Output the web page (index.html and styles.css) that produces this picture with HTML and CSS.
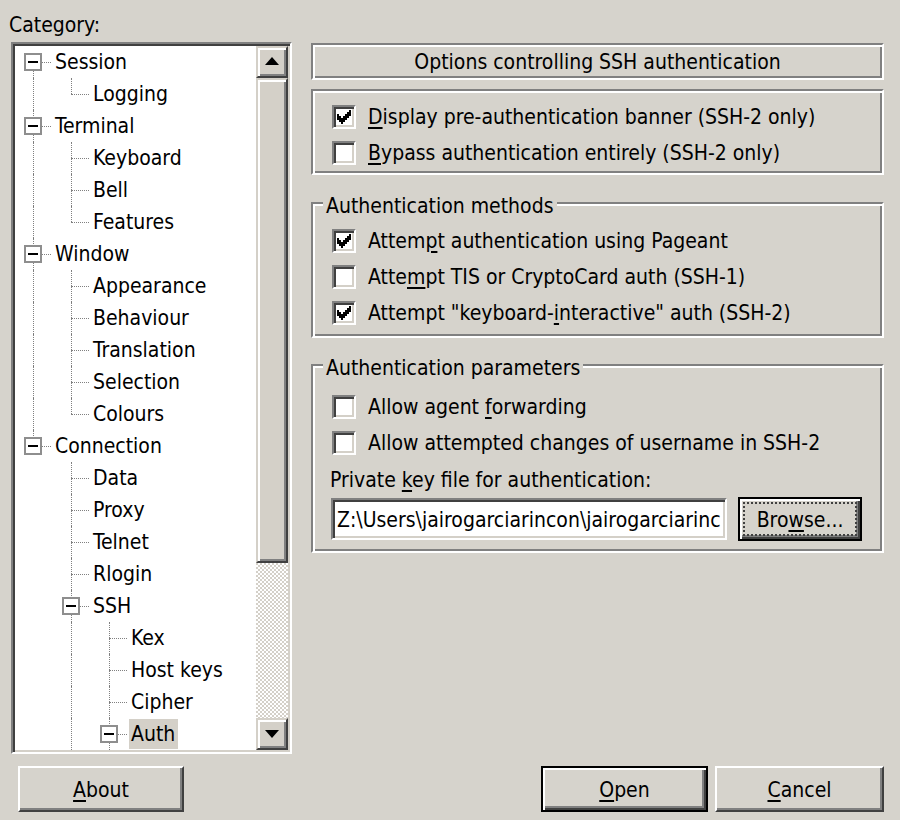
FILE: index.html
```html
<!DOCTYPE html>
<html lang="en">
<head>
  <meta charset="UTF-8">
  <title>PuTTY Configuration</title>
  <link rel="stylesheet" href="styles.css">
</head>
<body>
  <div class="dialog">
    <div class="main">

      <div class="category">
        <div class="caption">Category:</div>
        <div class="tree">
          <ul class="tree-list">
            <li class="row"><span class="cell first"><i class="expander"></i></span><span class="label">Session</span></li>
            <li class="row"><span class="cell pipe"></span><span class="cell elbow"></span><span class="label">Logging</span></li>
            <li class="row"><span class="cell tee"><i class="expander"></i></span><span class="label">Terminal</span></li>
            <li class="row"><span class="cell pipe"></span><span class="cell tee"></span><span class="label">Keyboard</span></li>
            <li class="row"><span class="cell pipe"></span><span class="cell tee"></span><span class="label">Bell</span></li>
            <li class="row"><span class="cell pipe"></span><span class="cell elbow"></span><span class="label">Features</span></li>
            <li class="row"><span class="cell tee"><i class="expander"></i></span><span class="label">Window</span></li>
            <li class="row"><span class="cell pipe"></span><span class="cell tee"></span><span class="label">Appearance</span></li>
            <li class="row"><span class="cell pipe"></span><span class="cell tee"></span><span class="label">Behaviour</span></li>
            <li class="row"><span class="cell pipe"></span><span class="cell tee"></span><span class="label">Translation</span></li>
            <li class="row"><span class="cell pipe"></span><span class="cell tee"></span><span class="label">Selection</span></li>
            <li class="row"><span class="cell pipe"></span><span class="cell elbow"></span><span class="label">Colours</span></li>
            <li class="row"><span class="cell elbow"><i class="expander"></i></span><span class="label">Connection</span></li>
            <li class="row"><span class="cell"></span><span class="cell tee"></span><span class="label">Data</span></li>
            <li class="row"><span class="cell"></span><span class="cell tee"></span><span class="label">Proxy</span></li>
            <li class="row"><span class="cell"></span><span class="cell tee"></span><span class="label">Telnet</span></li>
            <li class="row"><span class="cell"></span><span class="cell tee"></span><span class="label">Rlogin</span></li>
            <li class="row"><span class="cell"></span><span class="cell tee"><i class="expander"></i></span><span class="label">SSH</span></li>
            <li class="row"><span class="cell"></span><span class="cell pipe"></span><span class="cell tee"></span><span class="label">Kex</span></li>
            <li class="row"><span class="cell"></span><span class="cell pipe"></span><span class="cell tee"></span><span class="label">Host keys</span></li>
            <li class="row"><span class="cell"></span><span class="cell pipe"></span><span class="cell tee"></span><span class="label">Cipher</span></li>
            <li class="row"><span class="cell"></span><span class="cell pipe"></span><span class="cell tee"><i class="expander"></i></span><span class="label selected">Auth</span></li>
          </ul>
          <div class="scrollbar">
            <div class="sb-button"><span class="arrow-up"></span></div>
            <div class="sb-thumb"></div>
            <div class="sb-track"></div>
            <div class="sb-button"><span class="arrow-down"></span></div>
          </div>
        </div>
      </div>

      <div class="panel">
        <div class="heading">Options controlling SSH authentication</div>

        <div class="group group-banner">
          <label class="check">
            <span class="checkbox"><svg viewBox="0 0 7 7" width="14" height="14"><path d="M0 2h1v3H0zM1 3h1v3H1zM2 4h1v3H2zM3 3h1v3H3zM4 2h1v3H4zM5 1h1v3H5zM6 0h1v3H6z"/></svg></span>
            <span><u>D</u>isplay pre-authentication banner (SSH-2 only)</span>
          </label>
          <label class="check">
            <span class="checkbox"></span>
            <span><u>B</u>ypass authentication entirely (SSH-2 only)</span>
          </label>
        </div>

        <div class="group group-methods">
          <div class="group-title">Authentication methods</div>
          <label class="check">
            <span class="checkbox"><svg viewBox="0 0 7 7" width="14" height="14"><path d="M0 2h1v3H0zM1 3h1v3H1zM2 4h1v3H2zM3 3h1v3H3zM4 2h1v3H4zM5 1h1v3H5zM6 0h1v3H6z"/></svg></span>
            <span>Attem<u>p</u>t authentication using Pageant</span>
          </label>
          <label class="check">
            <span class="checkbox"></span>
            <span>Atte<u>m</u>pt TIS or CryptoCard auth (SSH-1)</span>
          </label>
          <label class="check">
            <span class="checkbox"><svg viewBox="0 0 7 7" width="14" height="14"><path d="M0 2h1v3H0zM1 3h1v3H1zM2 4h1v3H2zM3 3h1v3H3zM4 2h1v3H4zM5 1h1v3H5zM6 0h1v3H6z"/></svg></span>
            <span>Attempt "keyboard-<u>i</u>nteractive" auth (SSH-2)</span>
          </label>
        </div>

        <div class="group group-params">
          <div class="group-title">Authentication parameters</div>
          <label class="check">
            <span class="checkbox"></span>
            <span>Allow agent <u>f</u>orwarding</span>
          </label>
          <label class="check">
            <span class="checkbox"></span>
            <span>Allow attempted changes of username in SSH-2</span>
          </label>
          <div class="field-label">Private <u>k</u>ey file for authentication:</div>
          <div class="file-row">
            <input class="textbox" type="text" value="Z:\Users\jairogarciarincon\jairogarciarincon">
            <button class="btn btn-default btn-focus btn-browse">Bro<u>w</u>se...</button>
          </div>
        </div>
      </div>

    </div>

    <div class="buttons">
      <button class="btn btn-about"><u>A</u>bout</button>
      <button class="btn btn-default btn-open"><u>O</u>pen</button>
      <button class="btn btn-cancel"><u>C</u>ancel</button>
    </div>
  </div>
</body>
</html>
```

FILE: styles.css
```css
body {
  margin: 0;
  background: #d6d3cc;
  font-family: "DejaVu Sans Condensed", "DejaVu Sans", sans-serif;
  font-size: 21px;
  color: #000;
}
u {
  text-underline-offset: 3px;
  text-decoration-thickness: 2px;
}
.dialog {
  width: 900px;
  height: 820px;
  padding-left: 11px;
  box-sizing: border-box;
}
.main {
  display: flex;
  gap: 19px;
}

/* category tree */
.category {
  width: 281px;
  flex: none;
}
.caption {
  height: 42px;
  padding-top: 13px;
  box-sizing: border-box;
  line-height: 24px;
  margin-left: -2px;
}
.tree {
  display: flex;
  height: 712px;
  box-sizing: border-box;
  padding: 2px;
  background: #fff;
  border: 2px solid;
  border-color: #808080 #fff #fff #808080;
  box-shadow: inset 2px 2px #404040, inset -2px -2px #d4d0c8;
}
.tree-list {
  flex: 1;
  list-style: none;
  margin: 0;
  padding: 0;
  overflow: hidden;
}
.row {
  display: flex;
  align-items: center;
  height: 32px;
}
.cell {
  position: relative;
  flex: none;
  width: 38px;
  height: 32px;
}
.cell::before,
.cell::after {
  content: "";
  position: absolute;
}
.pipe::before,
.tee::before {
  left: 18px;
  top: 0;
  bottom: 0;
  border-left: 1px dotted #808080;
}
.elbow::before {
  left: 18px;
  top: 0;
  height: 16px;
  border-left: 1px dotted #808080;
}
.first::before {
  left: 18px;
  top: 16px;
  bottom: 0;
  border-left: 1px dotted #808080;
}
.tee::after,
.elbow::after,
.first::after {
  left: 18px;
  width: 18px;
  top: 16px;
  border-top: 1px dotted #808080;
}
.expander {
  position: absolute;
  z-index: 1;
  left: 9px;
  top: 7px;
  width: 18px;
  height: 18px;
  box-sizing: border-box;
  border: 2px solid #8e8e8e;
  background: #fff;
}
.expander::after {
  content: "";
  position: absolute;
  left: 2px;
  top: 6px;
  width: 10px;
  height: 2px;
  background: #000;
}
.label {
  padding: 1px 2px 0;
  line-height: 29px;
  white-space: nowrap;
}
.label.selected {
  background: #d4d0c8;
  padding-right: 3px;
}

/* scrollbar */
.scrollbar {
  display: flex;
  flex-direction: column;
  width: 32px;
  flex: none;
}
.sb-button,
.sb-thumb {
  box-sizing: border-box;
  background: #d4d0c8;
  border: 2px solid;
  border-color: #d4d0c8 #404040 #404040 #d4d0c8;
  box-shadow: inset 2px 2px #fff, inset -2px -2px #808080;
}
.sb-button {
  height: 32px;
  display: flex;
  align-items: center;
  justify-content: center;
}
.sb-thumb {
  height: 485px;
}
.sb-track {
  flex: 1;
  background: repeating-conic-gradient(#fff 0 25%, #d4d0c8 0 50%) 0 0 / 4px 4px;
}
.arrow-up,
.arrow-down {
  width: 0;
  height: 0;
  border-left: 7px solid transparent;
  border-right: 7px solid transparent;
}
.arrow-up {
  border-bottom: 8px solid #000;
  margin-top: -2px;
}
.arrow-down {
  border-top: 8px solid #000;
}

/* right-hand panel */
.panel {
  width: 573px;
  flex: none;
  padding-top: 43px;
}
.heading,
.group {
  box-sizing: border-box;
  border: 2px solid;
  border-color: #808080 #fff #fff #808080;
  box-shadow: inset 2px 2px #fff, inset -2px -2px #808080;
}
.heading {
  height: 37px;
  line-height: 35px;
  text-align: center;
}
.group {
  padding: 0 19px;
}
.group-title {
  display: table;
  margin: -10px 0 0 -9px;
  padding: 0 3px;
  line-height: 24px;
  background: #d6d3cc;
}
.group-banner {
  margin-top: 9px;
  padding-top: 8px;
  padding-bottom: 2px;
}
.group-methods {
  margin-top: 27px;
  padding-bottom: 5px;
}
.group-methods .group-title {
  margin-bottom: 5px;
}
.group-params {
  margin-top: 26px;
  padding-bottom: 10px;
}
.group-params .group-title {
  margin-bottom: 9px;
}
.check {
  display: flex;
  align-items: center;
  gap: 12px;
  height: 36px;
  line-height: 38px;
  white-space: nowrap;
}
.checkbox {
  display: flex;
  align-items: center;
  justify-content: center;
  flex: none;
  width: 24px;
  height: 24px;
  box-sizing: border-box;
  background: #fff;
  border: 2px solid;
  border-color: #808080 #fff #fff #808080;
  box-shadow: inset 2px 2px #404040, inset -2px -2px #d4d0c8;
}
.checkbox svg {
  shape-rendering: crispEdges;
}
.field-label {
  height: 36px;
  line-height: 38px;
  margin-left: -2px;
}
.file-row {
  display: flex;
  align-items: center;
  gap: 11px;
}
.textbox {
  width: 396px;
  height: 42px;
  margin: 0 0 0 -1px;
  padding: 2px 4px 0;
  box-sizing: border-box;
  font: inherit;
  color: #000;
  background: #fff;
  border: 2px solid;
  border-color: #808080 #fff #fff #808080;
  box-shadow: inset 2px 2px #404040, inset -2px -2px #d4d0c8;
  outline: none;
}

/* push buttons */
.btn {
  font: inherit;
  color: #000;
  background: #d6d3cc;
  box-sizing: border-box;
  padding: 2px 0 0;
  border: 2px solid;
  border-color: #fff #404040 #404040 #fff;
  box-shadow: inset -2px -2px #808080;
}
.btn-default {
  border-color: #000;
  box-shadow: inset 2px 2px #fff, inset -2px -2px #404040, inset -4px -4px #808080;
}
.btn-focus {
  outline: 2px dotted #404040;
  outline-offset: -7px;
}
.btn-browse {
  width: 124px;
  height: 44px;
}
.buttons {
  display: flex;
  gap: 7px;
  margin-top: 12px;
  padding-right: 16px;
}
.buttons .btn {
  height: 46px;
}
.btn-about {
  width: 166px;
  margin-left: 7px;
}
.btn-open {
  width: 167px;
  margin-left: auto;
}
.btn-cancel {
  width: 169px;
}
```
